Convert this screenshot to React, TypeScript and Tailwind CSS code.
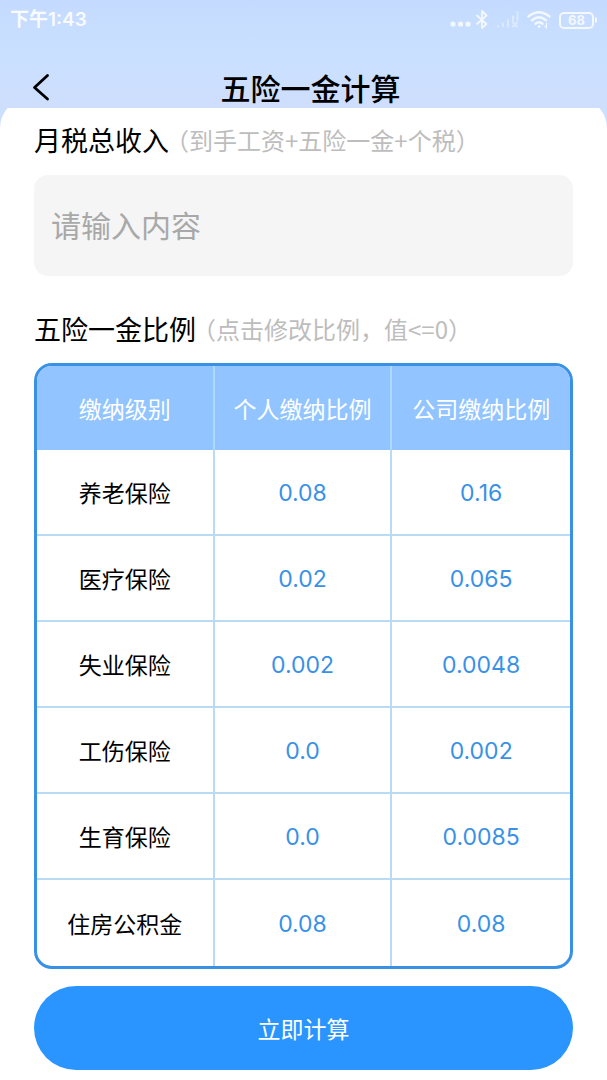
import React from "react";

const rates = [
  { name: "养老保险", personal: "0.08", company: "0.16" },
  { name: "医疗保险", personal: "0.02", company: "0.065" },
  { name: "失业保险", personal: "0.002", company: "0.0048" },
  { name: "工伤保险", personal: "0.0", company: "0.002" },
  { name: "生育保险", personal: "0.0", company: "0.0085" },
  { name: "住房公积金", personal: "0.08", company: "0.08" },
];

function StatusBar() {
  return (
    <div className="flex h-10 items-center justify-between px-[10px] text-white">
      <span className="font-['Inter','Noto_Sans_CJK_SC',sans-serif] text-[19px] leading-6 font-semibold opacity-90">下午1:43</span>
      <div className="flex items-center gap-2 opacity-80">
        <svg width="22" height="20" viewBox="0 0 22 20" fill="currentColor" aria-hidden="true">
          <circle cx="3" cy="14" r="2.6" />
          <circle cx="10.5" cy="14" r="2.6" />
          <circle cx="18" cy="14" r="2.6" />
        </svg>
        <svg className="-ml-1" width="12" height="20" viewBox="0 0 12 20" fill="none" stroke="currentColor" strokeWidth="1.8" aria-hidden="true">
          <path d="M1 5.5 10.5 14 6 18V1l4.500 4.500L1 14" strokeLinejoin="round" strokeLinecap="round" />
        </svg>
        <svg className="opacity-50" width="23" height="20" viewBox="0 0 23 20" stroke="currentColor" strokeWidth="2" strokeLinecap="round" fill="none" aria-hidden="true">
          <path d="M2 16v0.500M7 13.500v3M12 10v6.500M17 6.500v4M21.500 2v8M17 12.500l4 4M21 12.500l-4 4" />
        </svg>
        <svg width="24" height="20" viewBox="0 0 24 20" fill="none" stroke="currentColor" strokeWidth="2.400" strokeLinecap="round" aria-hidden="true">
          <path d="M1.500 6.500Q12-2 22.500 6.500M5 10.200Q12 4.500 19 10.200M8.500 13.700Q12 11 15.500 13.700" />
          <circle cx="12" cy="16.500" r="1" fill="currentColor" strokeWidth="1" />
          <path d="M19.500 13v5M18 16l1.500 2" strokeWidth="1.200" />
        </svg>
        <div className="flex items-center gap-px">
          <div className="flex h-[17px] w-[35px] items-center justify-center rounded-[5px] border-2 border-white font-['Inter',sans-serif] text-[13px] leading-[13px] font-bold">
            68
          </div>
          <div className="h-[6px] w-[2px] rounded-r bg-white" />
        </div>
      </div>
    </div>
  );
}

export default function App() {
  return (
    <div className="min-h-screen bg-white font-['Noto_Sans_CJK_SC',sans-serif] text-black">
      <div className="bg-gradient-to-b from-[#c4dbff] via-[#c9e0ff] to-[#cfdefd]">
        <StatusBar />
        <header className="grid h-[68px] grid-cols-[64px_1fr_50px] items-end pb-[5px]">
          <button type="button" aria-label="返回" className="flex h-8 items-center pl-8">
            <svg width="18" height="28" viewBox="0 0 18 28" fill="none" stroke="currentColor" strokeWidth="2.800" strokeLinecap="round" strokeLinejoin="round" aria-hidden="true">
              <path d="M15.500 2.500 2.500 14.500l13 11.500" />
            </svg>
          </button>
          <h1 className="text-center text-[30px] leading-8 font-medium">五险一金计算</h1>
        </header>
      </div>

      <main className="overflow-hidden bg-[#cbdfff]">
        <div className="-mt-[10px] rounded-t-[30px] bg-white px-[34px] pt-[22px] pb-[10px]">
          <form>
            <label htmlFor="income" className="flex items-center whitespace-nowrap leading-10">
              <span className="text-[27px]">月税总收入</span>
              <span className="-ml-1 text-[24px] text-[#bdbdbd]">（到手工资+五险一金+个税）</span>
            </label>
            <input
              id="income"
              type="text"
              inputMode="decimal"
              placeholder="请输入内容"
              className="mt-[15px] block h-[101px] w-full rounded-[14px] bg-[#f5f5f5] px-[17px] pb-[3px] text-[30px] placeholder:text-[#a8a8a8] focus:outline-none"
            />

            <h2 className="mt-[33px] flex items-center whitespace-nowrap leading-10 font-normal">
              <span className="text-[27px]">五险一金比例</span>
              <span className="-ml-1 text-[24px] text-[#bdbdbd]">（点击修改比例，值&lt;=0）</span>
            </h2>

            <div className="mt-[14px] overflow-hidden rounded-[18px] border-3 border-[#3991e6]">
              <table className="w-full table-fixed border-separate border-spacing-0 text-center text-[23px]">
                <thead>
                  <tr className="h-[84px] bg-[#92c5ff] text-white">
                    <th className="border-r-2 border-[#b0d8fb] p-0 font-normal">缴纳级别</th>
                    <th className="border-r-2 border-[#b0d8fb] p-0 font-normal">个人缴纳比例</th>
                    <th className="p-0 font-normal">公司缴纳比例</th>
                  </tr>
                </thead>
                <tbody className="[&>tr:last-child>*]:border-b-0">
                  {rates.map((rate) => (
                    <tr key={rate.name} className="h-[86px]">
                      <th scope="row" className="border-r-2 border-b-2 border-[#b9dbf3] p-0 font-normal">
                        {rate.name}
                      </th>
                      <td className="border-r-2 border-b-2 border-[#b9dbf3] p-0">
                        <button type="button" className="font-['Inter',sans-serif] text-[#3991e6]">{rate.personal}</button>
                      </td>
                      <td className="border-b-2 border-[#b9dbf3] p-0">
                        <button type="button" className="font-['Inter',sans-serif] text-[#3991e6]">{rate.company}</button>
                      </td>
                    </tr>
                  ))}
                </tbody>
              </table>
            </div>

            <button type="button" className="mt-[17px] h-[84px] w-full rounded-full bg-[#2b95ff] text-[23px] text-white">
              立即计算
            </button>
          </form>
        </div>
      </main>
    </div>
  );
}
